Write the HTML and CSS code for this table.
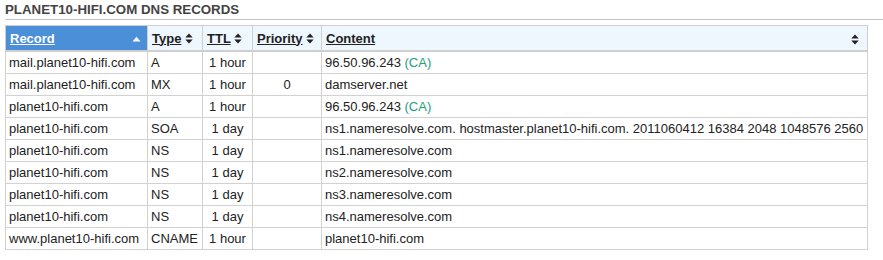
FILE: index.html
```html
<!DOCTYPE html>
<html>
<head>
<meta charset="utf-8">
<link rel="stylesheet" href="styles.css">
</head>
<body>
<div class="panel">
  <h2 class="title">PLANET10-HIFI.COM DNS RECORDS</h2>
  <table class="records">
    <colgroup>
      <col class="c-record"><col class="c-type"><col class="c-ttl"><col class="c-prio"><col class="c-content">
    </colgroup>
    <thead>
      <tr>
        <th class="active"><a href="#">Record</a><svg class="sort up" width="9" height="6" viewBox="0 0 9 6"><path d="M0.5 5.5 L4.5 0.8 L8.5 5.5 Z" fill="#fff"/></svg></th>
        <th><a href="#">Type</a> <svg class="sort" width="8" height="11" viewBox="0 0 8 11"><path d="M0.3 4.6 L4 0.6 L7.7 4.6 Z M0.3 6.4 L4 10.4 L7.7 6.4 Z" fill="#222"/></svg></th>
        <th><a href="#">TTL</a> <svg class="sort" width="8" height="11" viewBox="0 0 8 11"><path d="M0.3 4.6 L4 0.6 L7.7 4.6 Z M0.3 6.4 L4 10.4 L7.7 6.4 Z" fill="#222"/></svg></th>
        <th><a href="#">Priority</a> <svg class="sort" width="8" height="11" viewBox="0 0 8 11"><path d="M0.3 4.6 L4 0.6 L7.7 4.6 Z M0.3 6.4 L4 10.4 L7.7 6.4 Z" fill="#222"/></svg></th>
        <th class="content-h"><a href="#">Content</a><svg class="sort right" width="8" height="11" viewBox="0 0 8 11"><path d="M0.3 4.6 L4 0.6 L7.7 4.6 Z M0.3 6.4 L4 10.4 L7.7 6.4 Z" fill="#222"/></svg></th>
      </tr>
    </thead>
    <tbody>
      <tr><td>mail.planet10-hifi.com</td><td>A</td><td class="ctr">1 hour</td><td class="ctr"></td><td>96.50.96.243 <span class="geo">(CA)</span></td></tr>
      <tr><td>mail.planet10-hifi.com</td><td>MX</td><td class="ctr">1 hour</td><td class="ctr">0</td><td>damserver.net</td></tr>
      <tr><td>planet10-hifi.com</td><td>A</td><td class="ctr">1 hour</td><td class="ctr"></td><td>96.50.96.243 <span class="geo">(CA)</span></td></tr>
      <tr><td>planet10-hifi.com</td><td>SOA</td><td class="ctr">1 day</td><td class="ctr"></td><td>ns1.nameresolve.com. hostmaster.planet10-hifi.com. 2011060412 16384 2048 1048576 2560</td></tr>
      <tr><td>planet10-hifi.com</td><td>NS</td><td class="ctr">1 day</td><td class="ctr"></td><td>ns1.nameresolve.com</td></tr>
      <tr><td>planet10-hifi.com</td><td>NS</td><td class="ctr">1 day</td><td class="ctr"></td><td>ns2.nameresolve.com</td></tr>
      <tr><td>planet10-hifi.com</td><td>NS</td><td class="ctr">1 day</td><td class="ctr"></td><td>ns3.nameresolve.com</td></tr>
      <tr><td>planet10-hifi.com</td><td>NS</td><td class="ctr">1 day</td><td class="ctr"></td><td>ns4.nameresolve.com</td></tr>
      <tr><td>www.planet10-hifi.com</td><td>CNAME</td><td class="ctr">1 hour</td><td class="ctr"></td><td>planet10-hifi.com</td></tr>
    </tbody>
  </table>
</div>
</body>
</html>
```
FILE: styles.css
```css
html, body {
  margin: 0;
  padding: 0;
  background: #fff;
}
body {
  font-family: "Liberation Sans", Arial, Helvetica, sans-serif;
  color: #222;
  font-size: 13px;
}
.panel {
  padding: 2px 0 0 5px;
}
.title {
  margin: 0;
  font-size: 13.3px;
  line-height: 16px;
  font-weight: bold;
  color: #444;
  padding-bottom: 1px;
  border-bottom: 1px solid #c4c4c4;
}
.records {
  margin-top: 5px;
  width: 863px;
  table-layout: fixed;
  border-collapse: collapse;
  border: 1px solid #c8c8c8;
}
.c-record { width: 142px; }
.c-type { width: 55px; }
.c-ttl { width: 50px; }
.c-prio { width: 69px; }
.c-content { width: auto; }
.records th {
  background: #eef6fe;
  text-align: left;
  height: 24px;
  padding: 0 4px;
  border: 1px solid #cfcfcf;
  border-bottom: 2px solid #cfcfcf;
  font-weight: bold;
  white-space: nowrap;
  vertical-align: middle;
}
.records th a {
  color: #222;
  text-decoration: underline;
}
.records th.active {
  background: #4a8fd8;
}
.records th.active a {
  color: #fff;
}
.sort {
  vertical-align: -1px;
}
.sort.up {
  float: right;
  margin-top: 5px;
  margin-right: 2px;
}
.sort.right {
  float: right;
  margin-top: 3px;
  margin-right: 4px;
}
.records td {
  height: 21px;
  padding: 0 3px;
  border: 1px solid #d2d2d2;
  white-space: nowrap;
  overflow: hidden;
  vertical-align: middle;
  color: #222;
}
.records td.ctr {
  text-align: center;
}
.geo {
  color: #21a07a;
}
```
